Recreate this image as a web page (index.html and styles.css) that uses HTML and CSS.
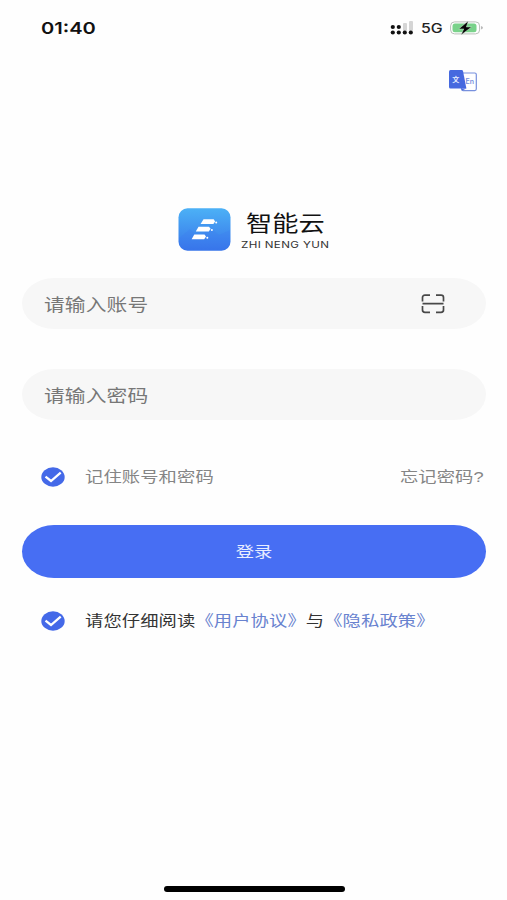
FILE: index.html
```html
<!DOCTYPE html>
<html lang="zh-CN">
<head>
<meta charset="utf-8">
<title>智能云</title>
<link rel="stylesheet" href="styles.css">
</head>
<body>
<div class="screen">
  <header class="status">
    <span class="wide time">01:40</span>
    <div class="indicators">
      <svg class="signal" width="24" height="14" viewBox="0 0 24 14">
        <g fill="#d5d5d5"><rect x="13" y="2" width="4" height="8" rx="1"/><rect x="19" y="0" width="4" height="10" rx="1"/></g>
        <g fill="#111"><circle cx="2.8" cy="6" r="2.1"/><circle cx="8.8" cy="6" r="2.1"/><circle cx="2.8" cy="11.5" r="2.1"/><circle cx="8.8" cy="11.5" r="2.1"/><circle cx="14.8" cy="11.5" r="2.1"/><circle cx="20.8" cy="11.5" r="2.1"/></g>
      </svg>
      <span class="wide network">5G</span>
      <svg class="battery" width="34" height="14" viewBox="0 0 34 14">
        <rect x=".6" y=".9" width="29" height="12" rx="4" fill="#fff" stroke="#b9bfb9"/>
        <rect x="2.5" y="2.6" width="24" height="8.6" rx="2.5" fill="#79d28a"/>
        <path d="M31.2 5v3.6q1.6-.5 1.6-1.8T31.2 5z" fill="#aaa"/>
        <path d="M18.300 0 8.800 7.900h5L11 14l10.500-8h-5.200z" fill="#050505" stroke="#e9f7eb" stroke-width=".4"/>
      </svg>
    </div>
  </header>
  <div class="tools">
    <svg width="30" height="24" viewBox="0 0 30 24">
      <rect x="13.5" y="4" width="14.8" height="17.6" rx="1.5" fill="#fff" stroke="#7790dd" stroke-width="1.2"/>
      <path d="M2.5 1h11.2q1 0 1.3 1l3.4 17.5H2.5Q1 19.500 1 18V2.500Q1 1 2.500 1z" fill="#4669df"/>
      <path d="m14 21.500 4.400-2h-5z" fill="#4669df"/>
      <text x="4.300" y="12.500" class="glyph-cn">文</text>
      <text x="17.600" y="14.500" class="glyph-en">En</text>
    </svg>
  </div>
  <section class="brand">
    <svg width="53" height="43" viewBox="0 0 53 43">
      <defs><linearGradient id="sky" x1="0" y1="0" x2="0" y2="1"><stop stop-color="#4cb1f6"/><stop offset="1" stop-color="#3774e9"/></linearGradient></defs>
      <rect x=".5" y=".3" width="52" height="42.400" rx="9" fill="url(#sky)"/>
      <path d="M1 30 12 21 20 28 33 20 41 27 52 22V34Q52 42 43 42H10Q1 42 1 34z" fill="#3977f0" opacity=".22"/>
      <g fill="#fff">
        <path d="M25.500 11.300h10.200l1.400 2.200-1.700 2.600H22.600z"/>
        <path d="M20.500 18.700h10.500l1.600 2.100-1.800 2.700H17.800z"/>
        <path d="M16.300 26.500h10.200l1.500 2.100-1.800 2.700H13.600z"/>
        <circle cx="38.200" cy="14.500" r="1"/><circle cx="33.900" cy="22" r="1"/><circle cx="29.300" cy="29.800" r="1"/>
      </g>
    </svg>
    <div class="names">
      <h1 class="wide name">智能云</h1>
      <span class="wide latin">ZHI NENG YUN</span>
    </div>
  </section>
  <form class="login">
    <div class="field">
      <span class="wide">请输入账号</span>
      <svg class="scan" width="24" height="20" viewBox="0 0 24 20">
        <path d="M1.500 7.500V3.500Q1.500 1.200 4 1.200H9M15 1.200h5q2.500 0 2.500 2.300v4M1.500 12v4q0 2.300 2.500 2.300H9M15 18.300h5q2.500 0 2.500-2.300v-4M1.500 9.700h21" fill="none" stroke="#484848" stroke-width="1.700"/>
      </svg>
    </div>
    <div class="field"><span class="wide">请输入密码</span></div>
    <div class="row remember">
      <svg class="check" width="24" height="20" viewBox="0 0 24 20"><ellipse cx="12" cy="10" rx="11.700" ry="9.700" fill="#4469e8"/><path d="m4.500 9.700 5.500 4.300 9.700-8.300" fill="none" stroke="#fff" stroke-width="2.300"/></svg>
      <span class="wide label">记住账号和密码</span>
      <span class="wide label forgot">忘记密码?</span>
    </div>
    <div class="submit"><span class="wide center">登录</span></div>
    <div class="row agree">
      <svg class="check" width="24" height="20" viewBox="0 0 24 20"><ellipse cx="12" cy="10" rx="11.700" ry="9.700" fill="#4469e8"/><path d="m4.500 9.700 5.500 4.300 9.700-8.300" fill="none" stroke="#fff" stroke-width="2.300"/></svg>
      <span class="wide label">请您仔细阅读<b>《用户协议》</b>与<b>《隐私政策》</b></span>
    </div>
  </form>
  <div class="home"></div>
</div>
</body>
</html>
```
FILE: styles.css
```css
* { box-sizing: border-box; }
body {
  margin: 0;
  background: #fefefe;
  font-family: "Liberation Sans", "Noto Sans CJK SC", sans-serif;
}
svg { display: block; flex: none; }
.screen {
  width: 507px;
  height: 900px;
  display: flex;
  flex-direction: column;
  overflow: hidden;
}
/* Type is set wider than its natural proportions. */
.wide {
  display: inline-block;
  white-space: nowrap;
  transform: scaleX(1.22);
  transform-origin: left center;
}
.status {
  height: 54px;
  padding: 1px 23px 0 41px;
  display: flex;
  align-items: center;
  justify-content: space-between;
}
.time {
  font: 600 16.500px/20px Inter, sans-serif;
  color: #111;
}
.indicators { display: flex; align-items: center; }
.network {
  width: 17px;
  margin: 0 12px 0 7px;
  font: 500 13px/16px Inter, sans-serif;
  color: #222;
}
.tools {
  height: 38px;
  padding: 15px 29px 0 0;
  display: flex;
  justify-content: flex-end;
}
.glyph-cn { font: 700 7px "Noto Sans CJK SC", sans-serif; fill: #eaf0ff; }
.glyph-en { font: 600 7px Inter, sans-serif; fill: #7790dd; }
.brand {
  margin: 115px 0 0 178px;
  height: 44px;
  display: flex;
  align-items: flex-start;
}
.brand svg { margin-top: 1px; }
.names {
  display: flex;
  flex-direction: column;
  margin-left: 10px;
}
.name {
  margin: 0 0 2px 5px;
  font: 400 21.500px/30px "Noto Sans CJK SC", sans-serif;
  color: #111;
}
.latin {
  font: 400 9.500px/12px Inter, sans-serif;
  letter-spacing: .3px;
  color: #333;
}
.login {
  margin: 27px 21px 0 22px;
  display: flex;
  flex-direction: column;
}
.field {
  height: 51px;
  margin-bottom: 40px;
  padding: 0 41px 0 22px;
  display: flex;
  align-items: center;
  justify-content: space-between;
  border-radius: 32px / 25.500px;
  background: #f7f7f7;
  font-size: 17px;
  letter-spacing: .1px;
  color: #777;
}
.row {
  height: 24px;
  padding-left: 19px;
  display: flex;
  align-items: center;
  font-size: 15px;
}
.check { margin-right: 20px; }
.label { padding-bottom: 3px; letter-spacing: .08px; }
.remember { margin-top: 5px; color: #858585; }
.forgot { margin: 0 2px 0 auto; transform-origin: right center; }
.submit {
  height: 53px;
  margin: 36px 0 31px;
  padding-bottom: 2px;
  display: flex;
  align-items: center;
  justify-content: center;
  border-radius: 32px / 26.500px;
  background: #476ef3;
  color: #e8edff;
  font-size: 15px;
}
.center { transform-origin: center; }
.agree { color: #333; }
.agree b { font-weight: 400; color: #6882cf; }
.home {
  width: 181px;
  height: 6px;
  margin: auto auto 8px 164px;
  border-radius: 3px;
  background: #000;
}
```
